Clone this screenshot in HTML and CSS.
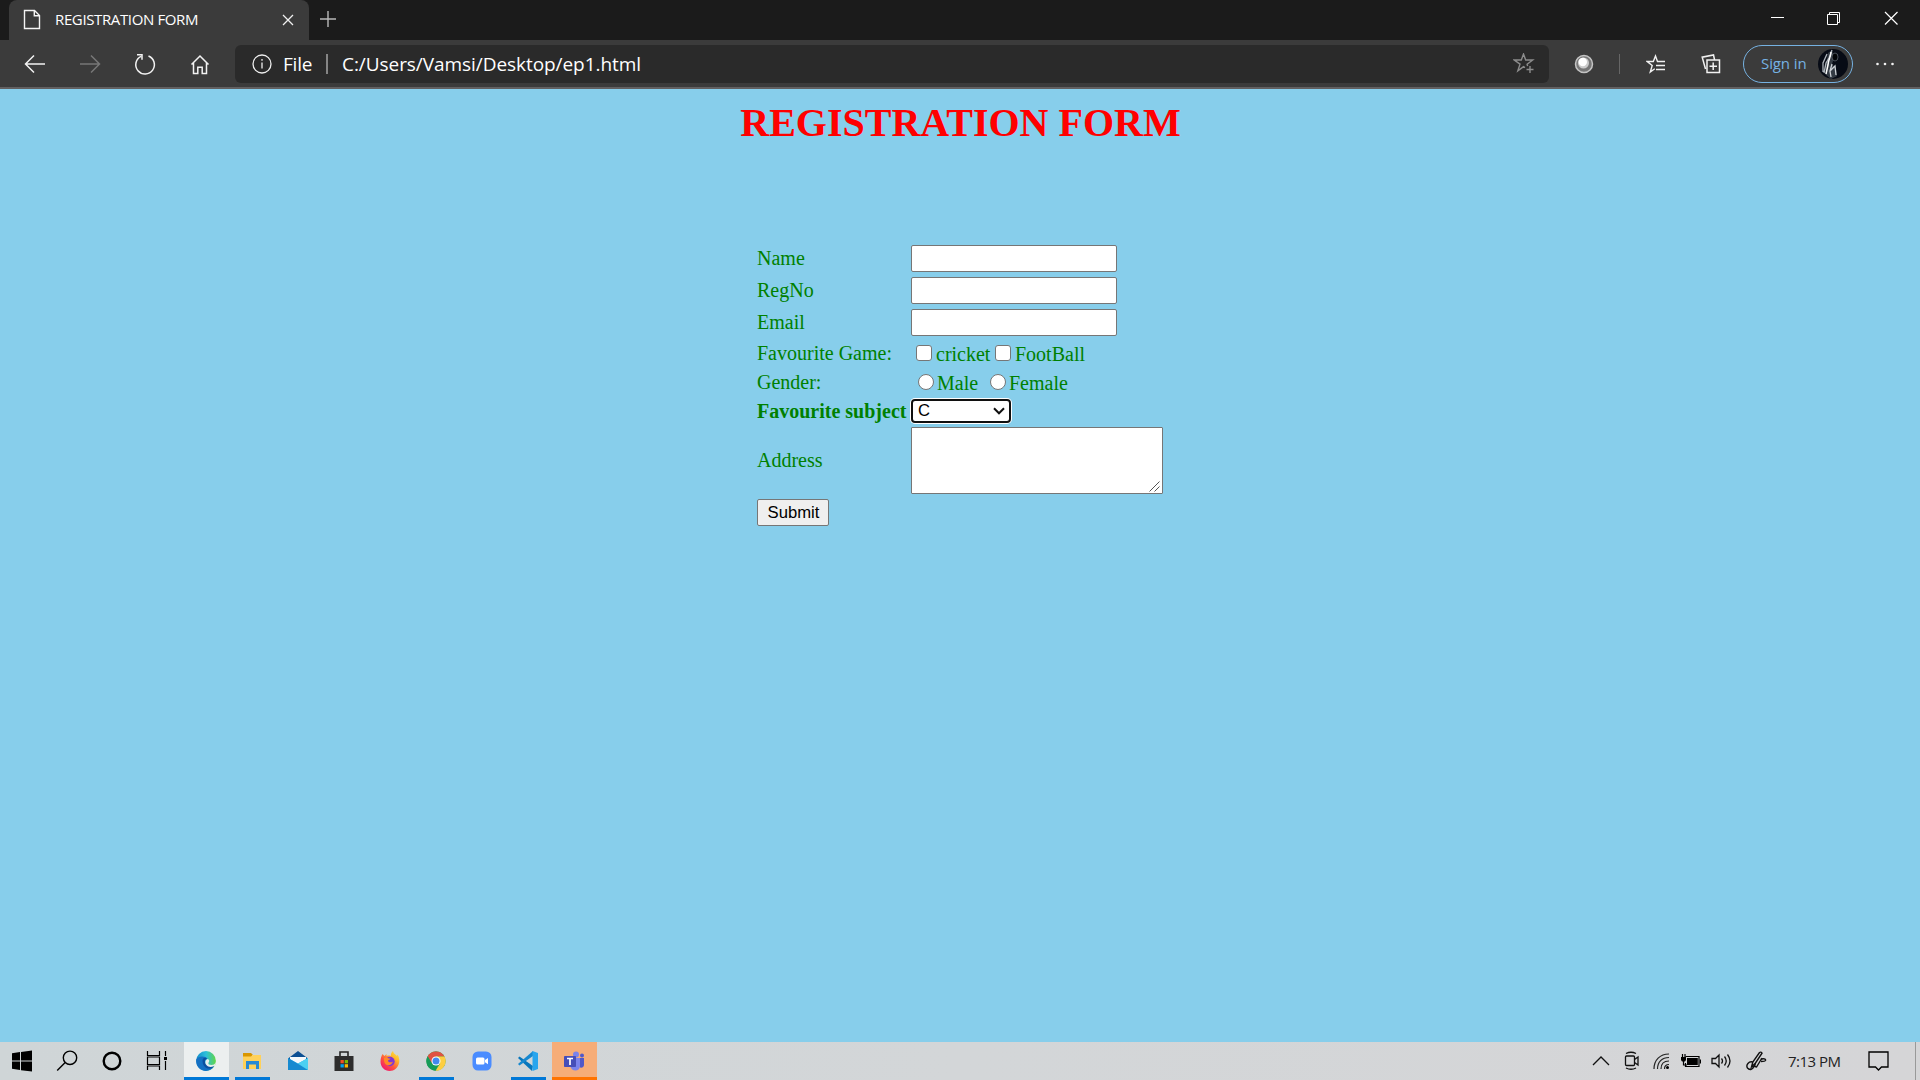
FILE: index.html
```html
<!DOCTYPE html>
<html lang="en">
<head>
<meta charset="utf-8">
<title>REGISTRATION FORM</title>
<link rel="stylesheet" href="styles.css">
</head>
<body>
<header class="titlebar">
  <div class="tab">
    <svg class="tab-page" width="18" height="22" viewBox="0 0 18 22" fill="none" stroke="#f4f4f4" stroke-width="1.4"><path d="M1.500 1.500h10l5 5v13h-15zM11.300 1.500v5.200h5.200"/></svg>
    <span class="tab-title">REGISTRATION FORM</span>
    <svg class="tab-close" width="12" height="12" viewBox="0 0 12 12" stroke="#f0f0f0" stroke-width="1.3"><path d="M1 1l10 10M11 1L1 11"/></svg>
  </div>
  <svg class="new-tab" width="18" height="18" viewBox="0 0 18 18" stroke="#b8b8b8" stroke-width="1.4"><path d="M9 1v16M1 9h16"/></svg>
  <div class="window-buttons">
    <svg width="57" height="36" viewBox="0 0 57 36" stroke="#fff" fill="none"><path d="M22 17.500h13"/></svg>
    <svg width="57" height="36" viewBox="0 0 57 36" stroke="#fff" fill="none"><path d="M21.500 14.500h10v10h-10zM23.500 14v-1.500h10v10H32"/></svg>
    <svg width="57" height="36" viewBox="0 0 57 36" stroke="#fff" stroke-width="1.2" fill="none"><path d="M22 12l12.500 12.500M34.500 12L22 24.500"/></svg>
  </div>
</header>
<nav class="toolbar">
  <div class="nav-buttons">
    <svg class="nav-icon" viewBox="0 0 24 24" stroke="#f2f2f2"><path d="M22 12H3M11 3.500L2.500 12l8.500 8.500"/></svg>
    <svg class="nav-icon" viewBox="0 0 24 24" stroke="#777"><path d="M2 12h19M13 3.500l8.500 8.500-8.500 8.500"/></svg>
    <svg class="nav-icon" viewBox="0 0 24 24" stroke="#f2f2f2"><path d="M15.500 4a9.300 9.300 0 1 1-7.500.3M4 2.800h5v5"/></svg>
    <svg class="nav-icon" viewBox="0 0 24 24" stroke="#f2f2f2"><path d="M3.500 12.500L12 4l8.500 8.500M5.500 11v10.500h4.300v-6.300h4.400v6.300h4.300V11"/></svg>
  </div>
  <div class="address">
    <svg class="info" width="20" height="20" viewBox="0 0 20 20" fill="none" stroke="#eee" stroke-width="1.3"><circle cx="10" cy="10" r="9"/><path d="M10 8.500v6M10 5v1.800"/></svg>
    <span class="scheme">File</span>
    <span class="address-divider"></span>
    <span class="path">C:/Users/Vamsi/Desktop/ep1.html</span>
    <svg class="star" width="22" height="22" viewBox="0 0 22 22" fill="none" stroke="#8c8c8c" stroke-width="1.4"><path d="M12 14.700l-1.500-1-5.700 4.200 2.200-6.800L1.300 7H8.300L10.500 1l2.200 6h7l-5.600 4.200.5 2M17 13v7M13.500 16.500h7"/></svg>
  </div>
  <svg class="extension" width="20" height="20" viewBox="0 0 20 20"><circle cx="10" cy="10" r="8.500" fill="#777" stroke="#c4c4c4" stroke-width="1.500"/><circle cx="9.500" cy="9" r="5.500" fill="#ccc"/><circle cx="8.800" cy="8" r="4.200" fill="#fff"/></svg>
  <span class="tool-divider"></span>
  <svg class="favorites" width="20" height="20" viewBox="0 0 20 20" fill="none" stroke="#f2f2f2" stroke-width="1.400"><path d="M19 7.500h-7.500L9.500 2 7.300 7.500H1.200l5 4L4.300 18l4.500-3.300M10 11.500h9M10 15.500h9"/></svg>
  <svg class="collections" width="20" height="20" viewBox="0 0 20 20" fill="none" stroke="#f2f2f2" stroke-width="1.500"><path d="M6 6h12.500v12.500H6zM12.200 8.500v7.500M8.500 12.200H16M4.500 15L1.200 3.200 12.500 1l1 4.500"/></svg>
  <div class="sign-in"><span class="sign-text">Sign in</span>
    <svg width="30" height="30" viewBox="0 0 30 30"><circle cx="15" cy="15" r="15" fill="#070b15"/><path d="M10 4l4-3 2 8-2 6 4 5 1 7-6 3-6-5 1-8z" fill="#343b44"/><path d="M14 1L11 9l-3 5-2 10M9 5L5 14v9" stroke="#aeb4bb" stroke-width="1.300" fill="none"/><path d="M13 3c0 5-3 8-3 13l-2 9" stroke="#fff" stroke-width="1.500" fill="none"/><path d="M14 15l-2 7 1 6M12 22l5-5 1 9" stroke="#ccd0d5" stroke-width="1.300" fill="none"/><ellipse cx="17" cy="8" rx="3" ry="4" fill="#020407" stroke="#757d88" stroke-width=".6"/></svg>
  </div>
  <svg class="more" width="18" height="4" viewBox="0 0 18 4" fill="#f2f2f2"><circle cx="1.500" cy="2" r="1.300"/><circle cx="9" cy="2" r="1.300"/><circle cx="16.500" cy="2" r="1.300"/></svg>
</nav>
<main class="page">
  <h1 class="heading">REGISTRATION FORM</h1>
  <form class="form">
    <label class="field-label">Name</label><input class="field" type="text">
    <label class="field-label">RegNo</label><input class="field" type="text">
    <label class="field-label">Email</label><input class="field" type="text">
    <label>Favourite Game:</label>
    <div class="choices games"><input class="box" type="checkbox"><span class="game-one">cricket</span><input class="box" type="checkbox"><span>FootBall</span></div>
    <label>Gender:</label>
    <div class="choices genders"><input class="box radio" type="radio"><span class="gender-one">Male</span><input class="box radio" type="radio"><span>Female</span></div>
    <label class="subject">Favourite subject</label>
    <div class="select"><span>C</span><svg width="12" height="8" viewBox="0 0 12 8" fill="none" stroke="#101010" stroke-width="2"><path d="M1 1.300l5 5 5-5"/></svg></div>
    <label class="field-label">Address</label>
    <div class="area"><textarea class="area-field"></textarea><svg class="grip" width="11" height="11" viewBox="0 0 11 11" stroke="#555" stroke-width="1"><path d="M.5 10.500l10-10M5.500 10.500l5-5"/></svg></div>
    <button class="submit" type="button">Submit</button>
  </form>
</main>
<footer class="taskbar">
  <div class="system">
    <svg viewBox="0 0 45 38"><path d="M12 11.300l8-1.200V18.500h-8zM21 10l11-1.500v10H21zM12 19.500h8V28l-8-1.200zM21 19.500h11V29.500L21 28.200z"/></svg>
    <svg viewBox="0 0 45 38" fill="none" stroke="#000" stroke-width="1.400"><circle cx="25" cy="15.800" r="6.700"/><path d="M20.200 20.500L12.200 28.500"/></svg>
    <svg viewBox="0 0 45 38" fill="none" stroke="#000" stroke-width="2.400"><circle cx="22" cy="19" r="8.300"/></svg>
    <svg viewBox="0 0 45 38" fill="none" stroke="#000" stroke-width="1.200"><path d="M12.500 9v4.500h12V9M12.500 28v-4h12v4M12.500 15h12v7.500h-12zM30.500 9v5M30.500 19v9"/><path d="M29 15h3v3h-3z" fill="#000" stroke="none"/></svg>
  </div>
  <div class="apps">
    <div class="app active"><svg viewBox="0 0 20 20"><defs><linearGradient id="edge-top"><stop stop-color="#128ac8"/><stop offset=".5" stop-color="#2dbfdc"/><stop offset="1" stop-color="#62d743"/></linearGradient></defs><circle cx="10" cy="10" r="9.900" fill="url(#edge-top)"/><path d="M.2 8.500C2 5 9.500 4.500 11.500 8c-3.500.5-4 4-2 6 2.300 2.300 6 2 8.700.7C16.500 18 13.500 19.900 10 19.900 4.500 20 .2 15.500.2 10z" fill="#1470c3"/><path d="M6.500 10c0-3 2.500-4 4.500-2.500-2.800 1.500-2.300 4.500-.5 6.300 2 2 5.500 2 7.700.9-1.800 2.700-4.500 3.300-6.500 2.700C8.500 16.500 6.500 14 6.500 10z" fill="#0d4fa0"/><path d="M11.500 8c1.800.3 2.300 2 1 3.700-.7 1.300.8 2.300 3 2.300 2 0 3.300-.8 4.300-2.500l-.8 3.300c-2.800 1.700-7 1.700-8.800-1-1.500-2.300-.6-5 1.300-5.800z" fill="#e9eeee"/></svg></div>
    <div class="app running"><svg viewBox="0 0 20 20"><path d="M1 2h8l2 2h-1v5H1z" fill="#d99600"/><path d="M1 5.500h8l1.500-1.500H19v14H1z" fill="#ffd15a"/><path d="M4 10h13v8h-3v-4.500H7V18H4z" fill="#2789d5"/></svg></div>
    <div class="app"><svg viewBox="0 0 20 20"><path d="M0 7.500L10 0l10 7.500-10 5z" fill="#0b4f93"/><path d="M2 6h16v7H2z" fill="#f5f9fb"/><path d="M0 7l10 5.500L20 7v12H0z" fill="#2aa8e5"/><path d="M0 7l20 12H0z" fill="#168ad0"/><path d="M20 7v12L10 12.500z" fill="#4bd0f2"/></svg></div>
    <div class="app"><svg viewBox="0 0 20 20"><path d="M6 6V1h8v5" fill="none" stroke="#252525" stroke-width="1.600"/><path d="M.5 5h19v15H.5z" fill="#2d2d2d"/><path d="M6.500 9h3.300v3.300H6.500z" fill="#f15124"/><path d="M10.700 9H14v3.300h-3.300z" fill="#7cba00"/><path d="M6.500 13.200h3.300v3.300H6.500z" fill="#00a4ef"/><path d="M10.700 13.200H14v3.300h-3.300z" fill="#ffb900"/></svg></div>
    <div class="app"><svg viewBox="0 0 20 20"><defs><linearGradient id="fire" x1="1" y1="0" x2=".2" y2="1"><stop stop-color="#fff34b"/><stop offset=".35" stop-color="#ffb62b"/><stop offset=".65" stop-color="#ff533e"/><stop offset="1" stop-color="#ee1373"/></linearGradient></defs><path d="M2.500 3l2 2 2-2v2c2-.7 3.500-.5 4.500 0-.5-2 .5-4 2-5 .5 3 3 3.500 4 5l.5-1.500c2 3 2 6 1.700 8-1 5-5 8.500-9.500 8.500C4.500 20 .5 16 .5 10.500.5 7 1.500 5 2.500 3z" fill="url(#fire)"/><circle cx="10" cy="10.500" r="4.700" fill="#8138d4"/><path d="M4 7c3-.8 4 .5 6.500.5-.5 1.500-2 1.300-2.500 2 0 2 3 2.500 5 1-1 4-6 5-8 2-1-1.500-1-3-1-5.500z" fill="#ff8a25"/></svg></div>
    <div class="app running"><svg viewBox="0 0 20 20"><circle cx="10" cy="10" r="9.700" fill="#35a853"/><path d="M1.600 5.200A9.700 9.700 0 0 1 18.500 5.500H10L5.500 12z" fill="#e05243"/><path d="M10 5.500h8.500A9.700 9.700 0 0 1 9.500 19.700l4.500-7z" fill="#fdce42"/><path d="M1.600 5.200A9.700 9.700 0 0 0 9.500 19.700L12 14H7z" fill="#169b58"/><circle cx="10" cy="10" r="4.500" fill="#fff"/><circle cx="10" cy="10" r="3.500" fill="#4389ee"/></svg></div>
    <div class="app"><svg viewBox="0 0 20 20"><rect x=".5" y=".5" width="19" height="19" rx="5.500" fill="#4a8cff"/><rect x="4" y="6.500" width="8.500" height="7" rx="1.500" fill="#fff"/><path d="M13 9l3-2v6.200l-3-2z" fill="#fff"/></svg></div>
    <div class="app running"><svg viewBox="0 0 20 20"><path d="M1.500 5.500L0 7l14 13 1-5z" fill="#0876bc"/><path d="M0 13l1.500 1.500L15 5V0z" fill="#1688d0"/><path d="M14.500 0L20 2v16l-5.500 2z" fill="#28a5ee"/></svg></div>
    <div class="app alert"><svg viewBox="0 0 20 20"><circle cx="12" cy="3.500" r="3" fill="#7b83eb"/><circle cx="18" cy="4.500" r="2" fill="#5059c9"/><path d="M14 7h6v7c0 2-2 3-4 2.500z" fill="#5059c9"/><path d="M6 7h10v8c0 6-9 6-9.500 0z" fill="#7b83eb"/><rect x="0" y="5" width="12" height="11" rx=".8" fill="#464eb8"/><path d="M3 7.500h6M6 7.500V14" stroke="#fff" stroke-width="1.700"/></svg></div>
  </div>
  <div class="tray">
    <svg class="chevron" width="18" height="10" viewBox="0 0 18 10" fill="none" stroke="#111" stroke-width="1.300"><path d="M1 9l8-8 8 8"/></svg>
    <svg class="meet" width="16" height="20" viewBox="0 0 16 20" fill="none" stroke="#111" stroke-width="1.300"><rect x="1.500" y="5" width="9" height="9.500" rx="1"/><path d="M10.500 8.500l3.500-2.500v8l-3.500-2.500M2 2.500q5-2.500 10 0M2 17q5 2.500 10 0"/></svg>
    <svg class="wifi" width="17" height="18" viewBox="0 0 17 18" fill="none" stroke="#222" stroke-width="1.200"><path d="M1 17C1 8 7 2 16 2M4.500 17C4.500 10 9 5.500 16 5.500M8 17c0-5 3-8 8-8"/><path d="M11.500 17c0-3 1.500-4.500 4.500-4.500"/><circle cx="14.500" cy="15.500" r="1.500" fill="#000" stroke="none"/></svg>
    <svg class="battery" width="20" height="14" viewBox="0 0 20 14"><path d="M4.500 2.500h13.500v10H4.500V9M19.500 5.500v4" fill="none" stroke="#000" stroke-width="1.200"/><path d="M6 4h10.800v7H6zM0 3h5v3L4 7.500H1L0 6z"/><path d="M1.500 0v3M4 0v3M2.500 7v4H6" fill="none" stroke="#000" stroke-width="1.200"/></svg>
    <svg class="sound" width="21" height="16" viewBox="0 0 21 16" fill="none" stroke="#111" stroke-width="1.300"><path d="M1 5.500h3.500L8 2v12l-3.500-3.500H1zM10.500 5.500q2 2.500 0 5M13.500 3.500q3.500 4.500 0 9M16.500 1.500q5 6.500 0 13"/></svg>
    <svg class="pen" width="21" height="20" viewBox="0 0 21 20" fill="none" stroke="#111" stroke-width="1.400"><path d="M5.500 16l1.300-5L13.500 1.500q1.500-1 2.500.7L9.500 12zM9.500 12l-1 3.500 2 .5 5.500-9M14.500 8.500c3-1.500 5.500-.5 5 1-.5 1-2.500 1-4.500 1M6.500 11C3 10-.5 14 1.500 17c2 2.500 6 1.500 6-2"/></svg>
    <span class="clock">7:13 PM</span>
    <svg class="notes" width="21" height="20" viewBox="0 0 21 20" fill="none" stroke="#000" stroke-width="1.300"><path d="M1 1h19v15h-6.500l-3 3-3-3H1z"/></svg>
    <span class="peek"></span>
  </div>
</footer>
</body>
</html>
```
FILE: styles.css
```css
* { box-sizing: border-box; }
body { margin: 0; width: 1920px; height: 1080px; overflow: hidden; display: flex; flex-direction: column; background: skyblue; font-family: "Open Sans", "Noto Sans", sans-serif; }
svg { display: block; flex: none; }
span { white-space: nowrap; }

.titlebar { height: 40px; background: #1b1b1b; display: flex; padding-left: 9px; }
.tab { width: 300px; height: 40px; background: #3b3b3b; border-radius: 8px 8px 0 0; display: flex; align-items: center; padding: 0 15px 0 14px; }
.tab-title { color: #fff; font-size: 15px; letter-spacing: -.37px; margin-left: 14px; flex: 1; line-height: 38px; height: 40px; }
.new-tab { margin: 10px 0 0 10px; }
.window-buttons { display: flex; margin-left: auto; }

.toolbar { height: 49px; background: #3b3b3b; border-bottom: 2px solid #626061; display: flex; align-items: center; }
.nav-buttons { width: 235px; display: flex; gap: 31px; padding-left: 23px; }
.nav-icon { width: 24px; height: 24px; fill: none; stroke-width: 1.5; }
.address { width: 1314px; height: 38px; background: #2a2a2a; border-radius: 6px; display: flex; align-items: center; padding: 0 14px 0 17px; color: #fff; font-size: 19px; }
.scheme { width: 30px; margin-left: 11px; letter-spacing: -.2px; }
.address-divider { width: 2px; height: 20px; background: #858585; margin-left: 13px; }
.path { margin-left: 14px; flex: 1; letter-spacing: -.06px; }
.extension { margin-left: 25px; }
.tool-divider { width: 1px; height: 20px; background: #666; margin-left: 25px; }
.favorites { margin-left: 26px; }
.collections { margin-left: 35px; }
.sign-in { width: 110px; height: 38px; border: 1.5px solid #76b2e2; border-radius: 19px; margin-left: 22px; display: flex; align-items: center; justify-content: space-between; padding: 0 4px 0 17px; color: #76b2e2; font-size: 15px; }
.sign-text { letter-spacing: -.1px; padding-bottom: 1px; }
.more { margin-left: 23px; }

.page { height: 953px; background: skyblue; font-family: "Liberation Serif", serif; }
.heading { margin: 0; padding: 11px 0 0 1px; color: red; font-size: 40px; line-height: 46px; text-align: center; }
.form { width: 406px; margin: 97px 0 0 757px; display: grid; grid-template-columns: 154px 252px; grid-template-rows: 32px 32px 32px 29px 28px 29px 72px 32px; align-items: center; color: green; font-size: 20px; line-height: 23px; }
.field-label { padding-bottom: 2px; }
.subject { font-weight: bold; white-space: nowrap; padding-top: 1px; }
.field { appearance: none; width: 206px; height: 27px; border: 1px solid #767676; border-radius: 2px; background: #fff; margin: 2px 0 0; padding: 1px 2px; align-self: start; }
.choices { display: flex; align-items: center; }
.choices span { padding-top: 2px; }
.games { padding-left: 5px; }
.genders { padding-left: 7px; }
.box { appearance: none; width: 16px; height: 16px; border: 1px solid #767676; border-radius: 3px; background: #fff; margin: 0 4px 0 0; }
.games .box { margin-bottom: 1px; }
.radio { border-radius: 50%; margin-right: 3px; }
.game-one { width: 59px; }
.gender-one { width: 53px; }
.select { width: 100px; height: 24px; border: 2px solid #101010; border-radius: 4px; background: #fff; box-shadow: 0 0 0 1px #fff; display: flex; align-items: center; justify-content: space-between; padding: 0 4px 0 5px; color: #000; font: 16.67px/20px "Liberation Sans", sans-serif; }
.area { position: relative; width: 252px; height: 67px; margin-top: 2px; align-self: start; }
.area-field { display: block; width: 252px; height: 67px; margin: 0; border: 1px solid #767676; border-radius: 1px; resize: none; background: #fff; }
.grip { position: absolute; right: 3px; bottom: 2px; }
.submit { width: 72px; height: 27px; border: 1px solid #767676; border-radius: 2px; background: #efefef; color: #000; font: 16.67px/20px "Liberation Sans", sans-serif; padding: 1px 0 0 1px; margin: 2px 0 0; align-self: start; }

.taskbar { height: 38px; background: linear-gradient(90deg, #cfd5d7, #d3d6d8 50%, #d5d5d7); display: flex; }
.system { display: flex; width: 184px; }
.system svg { width: 45px; height: 38px; }
.apps { display: flex; gap: 1px; }
.app { width: 45px; height: 38px; padding: 9px 1px 0 0; display: flex; justify-content: center; }
.app svg { width: 20px; height: 20px; }
.active { background: #ecefef; border-bottom: 3px solid #0078d7; }
.running { background: linear-gradient(#0078d7, #0078d7) 5px bottom / 35px 3px no-repeat; }
.alert { background: #f6ad78; border-bottom: 3px solid #ff7300; }
.tray { margin-left: auto; display: flex; align-items: center; width: 328px; }
.meet { margin-left: 14px; }
.wifi { margin-left: 13px; }
.battery { margin-left: 11px; }
.sound { margin-left: 10px; }
.pen { margin-left: 14px; }
.clock { width: 54px; margin-left: 21px; font-size: 15px; letter-spacing: -.5px; color: #222; }
.notes { margin-left: 26px; }
.peek { width: 1px; height: 38px; background: #999; margin-left: 26px; }
```
